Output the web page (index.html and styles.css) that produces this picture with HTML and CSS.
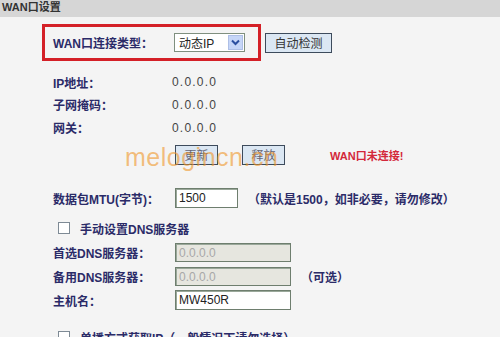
FILE: index.html
```html
<!DOCTYPE html>
<html lang="zh-CN">
<head>
    <meta charset="UTF-8">
    <title>WAN口设置</title>
    <link rel="stylesheet" href="styles.css">
</head>
<body>
    <div class="page-title">WAN口设置</div>

    <div class="form">
        <div class="type-row">
            <div class="type-box">
                <span class="label">WAN口连接类型：</span>
                <div class="select">
                    <span class="select-text">动态IP</span>
                    <span class="select-arrow">
                        <svg width="9" height="7" viewBox="0 0 9 7"><path d="M1 1.5 L4.5 5 L8 1.5" fill="none" stroke="#2b4fa0" stroke-width="2"/></svg>
                    </span>
                </div>
            </div>
            <button class="btn btn-detect">自动检测</button>
        </div>

        <div class="row info-first">
            <span class="label">IP地址：</span>
            <span class="value">0.0.0.0</span>
        </div>
        <div class="row info">
            <span class="label">子网掩码：</span>
            <span class="value">0.0.0.0</span>
        </div>
        <div class="row info">
            <span class="label">网关：</span>
            <span class="value">0.0.0.0</span>
        </div>

        <div class="row action-row">
            <span class="label"></span>
            <button class="btn btn-small">更新</button>
            <button class="btn btn-small btn-gap">释放</button>
            <span class="status">WAN口未连接!</span>
            <span class="watermark">melogincn.cn</span>
        </div>

        <div class="row mtu-row">
            <span class="label">数据包MTU(字节)：</span>
            <div class="input input-short">1500</div>
            <span class="note">（默认是1500，如非必要，请勿修改）</span>
        </div>

        <div class="row check-row">
            <span class="checkbox"></span>
            <span class="label">手动设置DNS服务器</span>
        </div>

        <div class="row field">
            <span class="label">首选DNS服务器：</span>
            <div class="input disabled">0.0.0.0</div>
        </div>
        <div class="row field">
            <span class="label">备用DNS服务器：</span>
            <div class="input disabled">0.0.0.0</div>
            <span class="note">（可选）</span>
        </div>
        <div class="row field">
            <span class="label">主机名：</span>
            <div class="input">MW450R</div>
        </div>

        <div class="row check-row last">
            <span class="checkbox"></span>
            <span class="label">单播方式获取IP（一般情况下请勿选择）</span>
        </div>
    </div>
</body>
</html>
```

FILE: styles.css
```css
/* Base */
body {
    margin: 0;
    background: #f4f4f4;
    font-family: "Liberation Sans", "Noto Sans CJK SC", sans-serif;
    font-size: 12px;
    color: #2b2b68;
    overflow: hidden;
}

.page-title {
    height: 17px;
    line-height: 15px;
    padding-left: 2px;
    background: #d6d6d6;
    font-weight: bold;
    font-size: 11px;
    color: #333;
}

.form {
    padding-left: 42px;
}

/* Connection type */
.type-row {
    display: flex;
    align-items: center;
    margin-top: 7px;
}

.type-box {
    display: flex;
    align-items: center;
    height: 31px;
    width: 195px;
    padding: 0 10px 0 8px;
    border: 3px solid #d42027;
}

.type-box .label {
    width: 121px;
}

.label {
    font-weight: bold;
    color: #2b2b68;
    white-space: nowrap;
}

.select {
    display: flex;
    align-items: center;
    justify-content: space-between;
    box-sizing: border-box;
    width: 71px;
    height: 19px;
    padding: 1px;
    background: #fff;
    border: 1px solid #7f8f7f;
}

.select-text {
    padding-left: 3px;
    color: #222;
    font-weight: normal;
}

.select-arrow {
    display: flex;
    align-items: center;
    justify-content: center;
    width: 15px;
    height: 15px;
    background: #c6d6f8;
    border: 1px solid #aebfe6;
    box-sizing: border-box;
}

/* Buttons */
.btn {
    box-sizing: border-box;
    height: 20px;
    padding: 0 4px;
    background: #dbe7f3;
    border: 1px solid #3d4b5c;
    font-family: "Noto Sans CJK SC", sans-serif;
    font-size: 12px;
    color: #333;
    line-height: 16px;
}

.btn-detect {
    margin-left: 4px;
    width: 67px;
}

.btn-small {
    width: 43px;
    color: #667;
}

.btn-gap {
    margin-left: 24px;
}

/* Rows */
.row {
    display: flex;
    align-items: center;
    padding-left: 11px;
    position: relative;
}

.row > .label {
    width: 122px;
}

.info-first {
    margin-top: 10px;
    height: 22px;
}

.info {
    height: 23px;
}

.value {
    margin-left: -3px;
    letter-spacing: 1.2px;
    color: #444;
}

.action-row {
    height: 20px;
    margin-top: 6px;
}

.status {
    margin-left: 45px;
    font-weight: bold;
    font-size: 11px;
    color: #d3283a;
}

.watermark {
    position: absolute;
    left: 83px;
    top: -2px;
    font-family: "Liberation Sans", sans-serif;
    font-size: 25px;
    color: rgba(240, 150, 40, 0.6);
    letter-spacing: 0.5px;
}

.mtu-row {
    height: 24px;
    margin-top: 21px;
}

.input {
    box-sizing: border-box;
    width: 116px;
    height: 20px;
    padding: 1px 3px;
    background: #fff;
    border: 1px solid #6e7e6e;
    box-shadow: inset 1px 1px 0 #9aa89a;
    color: #222;
    line-height: 16px;
}

.input-short {
    width: 63px;
}

.input.disabled {
    background: #e6e6df;
    color: #a8a8a8;
    height: 19px;
}

.note {
    margin-left: 10px;
    font-weight: bold;
    color: #2b2b68;
}

.check-row {
    height: 24px;
    margin-top: 6px;
    padding-left: 16px;
}

.checkbox {
    box-sizing: border-box;
    width: 12px;
    height: 12px;
    background: #fff;
    border: 1px solid #7e8a95;
    margin-right: 10px;
}

.check-row .label {
    width: auto;
}

.field {
    height: 24px;
}

.last {
    margin-top: 13px;
}
```
